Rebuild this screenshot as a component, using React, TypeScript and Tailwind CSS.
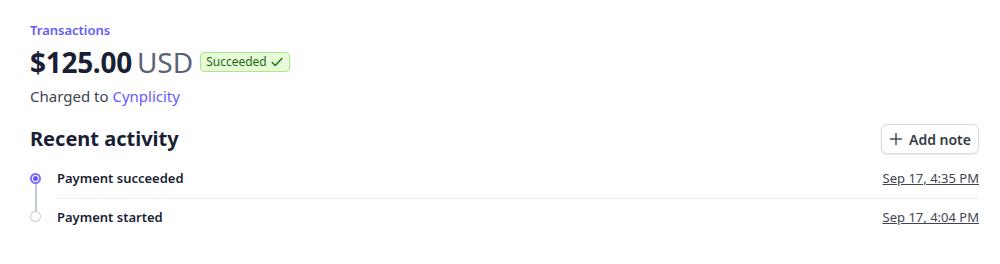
import React from "react";

export default function App() {
  return (
    <div className="w-[1000px] h-[264px] bg-white pl-[30px] pr-[21px] pt-[21px] font-['Noto_Sans',sans-serif] text-[#1a1f36]">
      <div className="text-[13px] leading-[18px] font-semibold text-[#635bff]">Transactions</div>
      <div className="flex items-center mt-[7px] h-[32px]">
        <span className="text-[28px] font-bold leading-[32px] text-[#1a1f36] tracking-[-0.3px]">$125.00</span>
        <span className="text-[28px] leading-[32px] text-[#5c6275] ml-[5px]">USD</span>
        <span className="ml-[7px] inline-flex items-center h-[20px] px-[5px] rounded-[4px] border border-[#a8e98a] bg-[#e7fbd9] text-[12px] text-[#1f6a0f] gap-[3px]">
          Succeeded
          <svg width="14" height="14" viewBox="0 0 16 16" fill="none">
            <path d="M2.5 8.5l3.5 3.5 7.5-8" stroke="#1f7a12" strokeWidth="1.8" strokeLinecap="round" strokeLinejoin="round" />
          </svg>
        </span>
      </div>
      <div className="mt-[8px] text-[15px] leading-[20px] text-[#414552]">
        Charged to <span className="text-[#635bff]">Cynplicity</span>
      </div>
      <div className="flex items-center justify-between mt-[18px]">
        <div className="text-[20px] font-bold leading-[28px] text-[#1a1f36]">Recent activity</div>
        <button className="h-[30px] px-[7px] flex items-center gap-[6px] rounded-[6px] border border-[#d5dbe1] bg-white shadow-[0_1px_2px_rgba(0,0,0,0.08)] text-[14px] font-semibold text-[#353a44]">
          <svg width="14" height="14" viewBox="0 0 14 14" fill="none">
            <path d="M7 1.5v11M1.5 7h11" stroke="#474e5a" strokeWidth="1.5" strokeLinecap="round" />
          </svg>
          Add note
        </button>
      </div>
      <div className="mt-[5px] flex">
        <div className="w-[11px] flex flex-col items-center pt-[14px]">
          <div className="w-[11px] h-[11px] rounded-full border-2 border-[#7b6cff] bg-white flex items-center justify-center">
            <div className="w-[5px] h-[5px] rounded-full bg-[#635bff]" />
          </div>
          <div className="w-[2px] h-[27px] bg-[#c0c8d2]" />
          <div className="w-[11px] h-[11px] rounded-full border-[1.5px] border-[#c0c8d2] bg-white" />
        </div>
        <div className="flex-1 ml-[16px]">
          <div className="flex items-center justify-between h-[40px] border-b border-[#ebeef1]">
            <span className="text-[13px] font-semibold text-[#1a1f36]">Payment succeeded</span>
            <span className="text-[13px] text-[#414552] underline">Sep 17, 4:35 PM</span>
          </div>
          <div className="flex items-center justify-between h-[38px]">
            <span className="text-[13px] font-semibold text-[#1a1f36]">Payment started</span>
            <span className="text-[13px] text-[#414552] underline">Sep 17, 4:04 PM</span>
          </div>
        </div>
      </div>
    </div>
  );
}
